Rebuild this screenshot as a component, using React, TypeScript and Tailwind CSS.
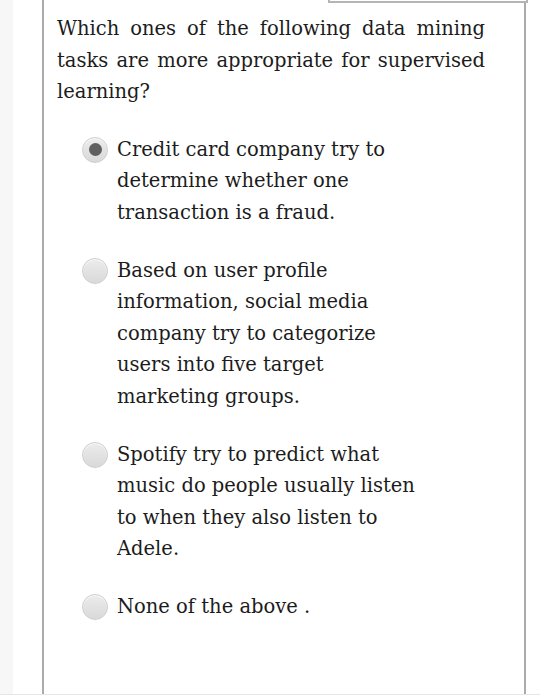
import React from "react";

const options = [
  { text: "Credit card company try to determine whether one transaction is a fraud.", checked: true },
  { text: "Based on user profile information, social media company try to categorize users into five target marketing groups.", checked: false },
  { text: "Spotify try to predict what music do people usually listen to when they also listen to Adele.", checked: false },
  { text: "None of the above .", checked: false },
];

function Radio({ checked }: { checked: boolean }) {
  return (
    <div className="mt-[3px] flex h-[26px] w-[26px] shrink-0 items-center justify-center rounded-full border border-[#cfcfcf] bg-[linear-gradient(180deg,#ececec,#d9d9d9)] shadow-[inset_0_1px_1px_rgba(255,255,255,0.8)]">
      {checked && <div className="h-[13px] w-[13px] rounded-full bg-[#5f5f5f]" />}
    </div>
  );
}

export default function App() {
  return (
    <div
      className="relative flex h-[697px] w-[540px] overflow-hidden bg-white text-[#1c1c1c]"
      style={{ fontFamily: '"DejaVu Serif", "Liberation Serif", serif' }}
    >
      <div className="h-full w-[13px] bg-[#f7f7f7]" />
      <div className="relative ml-[29px] flex h-[694px] w-[484px] flex-col border-x-2 border-[#ababab] pl-[13px]">
        <div className="absolute left-[284px] top-[-2px] h-[5px] w-[200px] border-2 border-[#b5b5b5] bg-white" />
        <p className="mt-[13px] w-[428px] text-justify text-[19.5px] leading-[31.5px]">
          Which ones of the following data mining tasks are more appropriate for supervised learning?
        </p>
        <div className="mt-[26px] flex flex-col gap-[26.5px] pl-[25px]">
          {options.map((o, i) => (
            <div key={i} className="flex items-start gap-[9px]">
              <Radio checked={o.checked} />
              <p className="w-[306px] text-[19.5px] leading-[31.5px]">{o.text}</p>
            </div>
          ))}
        </div>
      </div>
      <div className="absolute bottom-0 left-0 h-[3px] w-full border-t border-[#e6e6e6] bg-white" />
    </div>
  );
}
